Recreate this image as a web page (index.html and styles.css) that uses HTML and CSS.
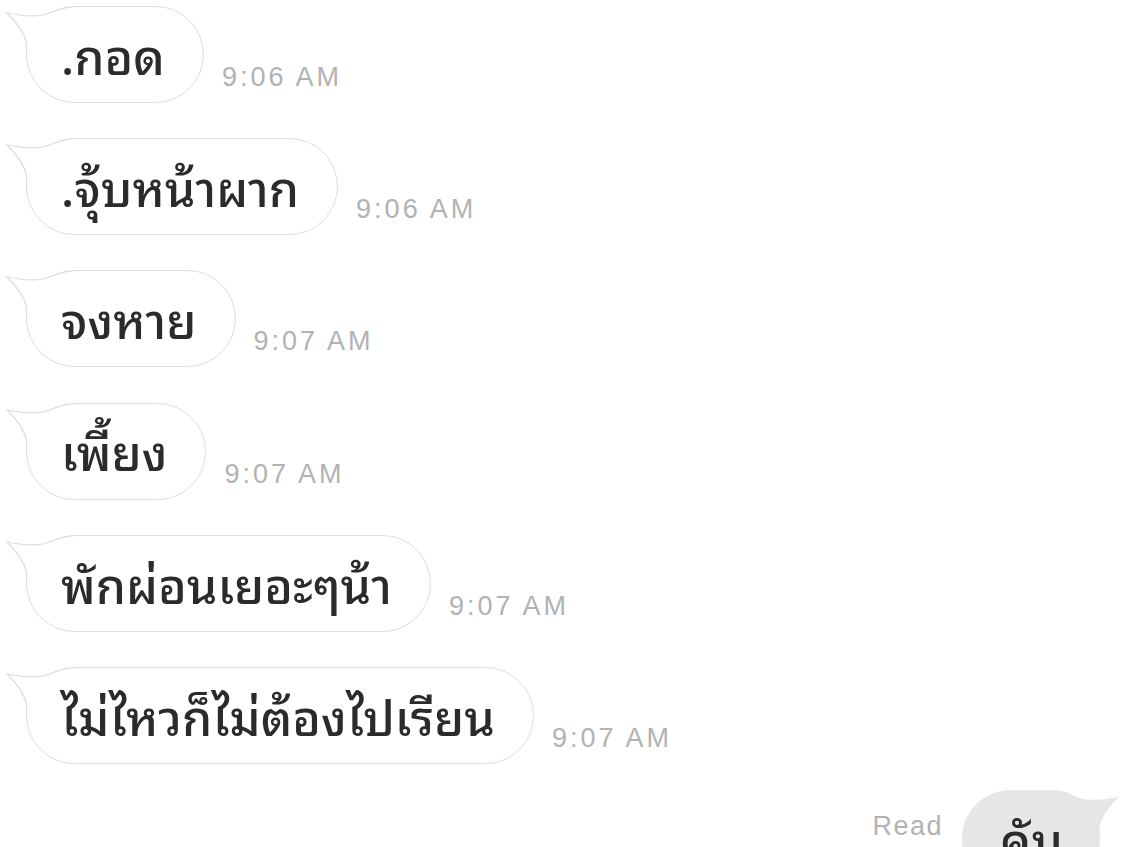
FILE: index.html
```html
<!DOCTYPE html>
<html lang="th">
<head>
<meta charset="utf-8">
<title>Chat</title>
<link rel="stylesheet" href="styles.css">
</head>
<body>
<div class="chat">
  <div class="row">
    <div class="bubble in">
      <svg class="tail" viewBox="0 0 75 55" width="75" height="55"><path class="tail-fill" d="M2 8 C15 10.5 30 12 40 9.5 C50 6.5 58 1.5 74 1.5 L74 40 L21.5 54 L21.5 38 C19 26 10 16 2 8 Z"/><path class="tail-line" d="M74 1.5 C58 1.5 50 6.5 40 9.5 C30 12 15 10.5 2 8 C10 16 19 26 21.5 38 L21.5 54"/></svg>
      <span class="msg">.กอด</span>
    </div>
    <span class="time">9:06 AM</span>
  </div>
  <div class="row">
    <div class="bubble in">
      <svg class="tail" viewBox="0 0 75 55" width="75" height="55"><path class="tail-fill" d="M2 8 C15 10.5 30 12 40 9.5 C50 6.5 58 1.5 74 1.5 L74 40 L21.5 54 L21.5 38 C19 26 10 16 2 8 Z"/><path class="tail-line" d="M74 1.5 C58 1.5 50 6.5 40 9.5 C30 12 15 10.5 2 8 C10 16 19 26 21.5 38 L21.5 54"/></svg>
      <span class="msg">.จุ้บหน้าผาก</span>
    </div>
    <span class="time">9:06 AM</span>
  </div>
  <div class="row">
    <div class="bubble in">
      <svg class="tail" viewBox="0 0 75 55" width="75" height="55"><path class="tail-fill" d="M2 8 C15 10.5 30 12 40 9.5 C50 6.5 58 1.5 74 1.5 L74 40 L21.5 54 L21.5 38 C19 26 10 16 2 8 Z"/><path class="tail-line" d="M74 1.5 C58 1.5 50 6.5 40 9.5 C30 12 15 10.5 2 8 C10 16 19 26 21.5 38 L21.5 54"/></svg>
      <span class="msg">จงหาย</span>
    </div>
    <span class="time">9:07 AM</span>
  </div>
  <div class="row">
    <div class="bubble in">
      <svg class="tail" viewBox="0 0 75 55" width="75" height="55"><path class="tail-fill" d="M2 8 C15 10.5 30 12 40 9.5 C50 6.5 58 1.5 74 1.5 L74 40 L21.5 54 L21.5 38 C19 26 10 16 2 8 Z"/><path class="tail-line" d="M74 1.5 C58 1.5 50 6.5 40 9.5 C30 12 15 10.5 2 8 C10 16 19 26 21.5 38 L21.5 54"/></svg>
      <span class="msg">เพี้ยง</span>
    </div>
    <span class="time">9:07 AM</span>
  </div>
  <div class="row">
    <div class="bubble in">
      <svg class="tail" viewBox="0 0 75 55" width="75" height="55"><path class="tail-fill" d="M2 8 C15 10.5 30 12 40 9.5 C50 6.5 58 1.5 74 1.5 L74 40 L21.5 54 L21.5 38 C19 26 10 16 2 8 Z"/><path class="tail-line" d="M74 1.5 C58 1.5 50 6.5 40 9.5 C30 12 15 10.5 2 8 C10 16 19 26 21.5 38 L21.5 54"/></svg>
      <span class="msg">พักผ่อนเยอะๆน้า</span>
    </div>
    <span class="time">9:07 AM</span>
  </div>
  <div class="row">
    <div class="bubble in">
      <svg class="tail" viewBox="0 0 75 55" width="75" height="55"><path class="tail-fill" d="M2 8 C15 10.5 30 12 40 9.5 C50 6.5 58 1.5 74 1.5 L74 40 L21.5 54 L21.5 38 C19 26 10 16 2 8 Z"/><path class="tail-line" d="M74 1.5 C58 1.5 50 6.5 40 9.5 C30 12 15 10.5 2 8 C10 16 19 26 21.5 38 L21.5 54"/></svg>
      <span class="msg">ไม่ไหวก็ไม่ต้องไปเรียน</span>
    </div>
    <span class="time">9:07 AM</span>
  </div>
  <div class="row out-row">
    <div class="meta">
      <span class="read">Read</span>
    </div>
    <div class="bubble out">
      <svg class="tail tail-out" viewBox="0 0 75 55" width="75" height="55"><path class="tail-fill-out" d="M2 8 C15 10.5 30 12 40 9.5 C50 6.5 58 1.5 74 1.5 L74 40 L21.5 54 L21.5 38 C19 26 10 16 2 8 Z"/></svg>
      <span class="msg">คับ</span>
    </div>
  </div>
</div>
</body>
</html>
```

FILE: styles.css
```css
html, body {
  margin: 0;
  padding: 0;
  background: #ffffff;
  overflow: hidden;
  width: 1124px;
  height: 847px;
}

.chat {
  display: flex;
  flex-direction: column;
  gap: 35.2px;
  padding: 6px 24px 0 26px;
}

.row {
  display: flex;
  align-items: flex-end;
  gap: 18px;
}

.out-row {
  justify-content: flex-end;
  margin-top: -9px;
  gap: 19px;
}

.bubble {
  position: relative;
  box-sizing: border-box;
  height: 97px;
  display: flex;
  align-items: center;
  padding: 0 38px 0 34px;
  border-radius: 49px;
}

.bubble.in {
  background: #ffffff;
  border: 1px solid #dedede;
}

.bubble.out {
  background: #e6e6e6;
  padding: 0 37px 0 38px;
}

.tail {
  position: absolute;
  left: -22px;
  top: -2px;
  width: 75px;
  height: 55px;
}

.tail-out {
  left: auto;
  right: -21px;
  top: -1px;
  transform: scaleX(-1);
}

.tail-fill {
  fill: #ffffff;
}

.tail-line {
  fill: none;
  stroke: #dedede;
  stroke-width: 1.2;
}

.tail-fill-out {
  fill: #e6e6e6;
}

.msg {
  position: relative;
  z-index: 1;
  font-family: "Noto Sans Thai Looped", "Loma", "Garuda", "Tlwg Typo", "Noto Sans Thai", "Noto Sans", sans-serif;
  font-size: 48.5px;
  font-weight: 500;
  color: #2b2b2b;
  line-height: 1;
  margin-top: -3px;
  white-space: nowrap;
}

.time {
  font-family: "Liberation Sans", Arial, sans-serif;
  font-size: 27px;
  letter-spacing: 3px;
  color: #b2b2b2;
  line-height: 1;
  margin-bottom: 12px;
  white-space: nowrap;
}

.meta {
  display: flex;
  flex-direction: column;
  align-items: flex-end;
  margin-bottom: 47px;
}

.read {
  font-family: "Liberation Sans", Arial, sans-serif;
  font-size: 27px;
  letter-spacing: 1.5px;
  color: #b2b2b2;
  line-height: 1;
}
```
